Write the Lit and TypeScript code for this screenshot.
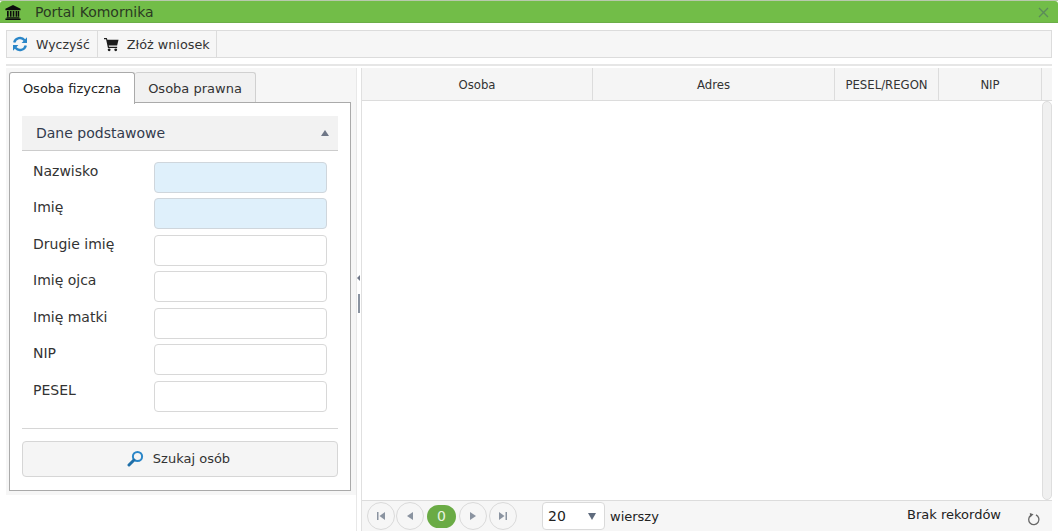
import { LitElement, html, css, svg } from "lit";
import { customElement } from "lit/decorators.js";

const field = (label: string, req = false) => html`
  <label class="lbl">${label}</label><div class="inp ${req ? "req" : ""}"></div>`;

const pagerIcon = (d: string) => svg`<svg width="12" height="12" viewBox="0 0 12 12"><path d=${d} fill="#8a93a0"/></svg>`;

@customElement("app-root")
export class AppRoot extends LitElement {
  static styles = css`
    :host {
      display: flex; flex-direction: column; width: 1058px; height: 531px; overflow: hidden;
      background: #fff; font-family: "DejaVu Sans", sans-serif; font-size: 13px; color: #222; box-sizing: border-box;
    }
    * { box-sizing: border-box; }
    .top { height: 1px; background: #b9c9ae; flex: none; }
    .title {
      flex: none; height: 22px; background: #72bd48; border-bottom: 1px solid #6cae48; border-radius: 3px 3px 0 0;
      display: flex; align-items: center; padding: 1px 9px 0 5px; color: #2a3a22;
    }
    .title svg { flex: none; }
    .title span { margin-left: 14px; flex: 1; font-size: 14px; margin-top: -1px; }
    .toolbar {
      flex: none; height: 28px; margin: 7px 6px 0; border: 1px solid #dcdcdc; background: #f6f6f6; display: flex;
    }
    .tbtn { display: flex; align-items: center; border-right: 1px solid #dcdcdc; padding: 0 7px 0 5px; gap: 8px; font-size: 12.5px; color: #333; }
    .tbtn.two { padding: 0 6px 0 6px; gap: 8px; font-size: 12.8px; }
    .rule { flex: none; height: 2px; margin: 6px 6px 0; background: #e6e6e6; }
    .main { flex: 1; display: flex; min-height: 0; margin: 2px 6px 0; }
    .left { flex: none; width: 350px; display: flex; flex-direction: column; }
    .leftbox { background: #f6f6f6; padding: 4px 5px 4px 3px; height: 427px; display: flex; flex-direction: column; }
    .tabs { display: flex; height: 31px; flex: none; }
    .tab {
      height: 31px; border: 1px solid #d0d0d0; border-bottom: 0; border-left: 0; border-radius: 3px 3px 0 0; background: #f1f1f1;
      display: flex; align-items: center; justify-content: center; width: 121px; font-size: 13px; color: #333;
    }
    .tab.on {
      width: 126px; background: #fff; border: 1px solid #aaa; border-bottom: 0; position: relative; z-index: 1; height: 32px; color: #222; padding-bottom: 1px;
    }
    .panel {
      flex: 1; background: #fff; border: 1px solid #aaa; padding: 13px 12px 12px; display: flex; flex-direction: column; margin-top: -1px;
    }
    .sect {
      flex: none; height: 35px; background: #f2f2f2; border-bottom: 1px solid #ccc; display: flex; align-items: center;
      justify-content: space-between; padding: 0 9px 0 14px; font-size: 14px; color: #333b4d;
    }
    .tri { width: 0; height: 0; border-left: 4px solid transparent; border-right: 4px solid transparent; border-bottom: 6px solid #6f7787; }
    .form {
      flex: none; display: grid; grid-template-columns: 121px 173px; grid-auto-rows: 31px; row-gap: 5.5px; padding: 10.9px 0 0 11px;
    }
    .lbl { font-size: 14px; line-height: 18px; color: #333; }
    .inp { border: 1px solid #d8d8d8; border-radius: 4px; background: #fff; }
    .inp.req { background: #dff0fb; border-color: #cfd6dc; }
    .divider { flex: none; height: 1px; background: #d6d6d6; margin-top: 16.1px; }
    .search {
      flex: none; height: 36px; margin-top: 12px; border: 1px solid #d6d6d6; border-radius: 4px; background: #f5f5f5;
      display: flex; align-items: center; justify-content: center; gap: 9px; font-size: 13px; color: #333; padding-right: 3px;
    }
    .split {
      flex: none; width: 6px; position: relative; background: #fff; border-left: 1px solid #e8e8e8; border-right: 1px solid #e0e0e0;
    }
    .split i { position: absolute; left: 0; top: 207px; width: 0; height: 0; border-top: 3px solid transparent; border-bottom: 3px solid transparent; border-right: 3px solid #6f7787; }
    .split b { position: absolute; left: 1px; top: 226px; width: 2px; height: 19px; background: #8a93a0; }
    .right { flex: 1; display: flex; flex-direction: column; min-width: 0; }
    .ghead { flex: none; height: 33px; background: #f5f5f5; border-bottom: 1px solid #dcdcdc; display: flex; }
    .col {
      display: flex; align-items: center; justify-content: center; border-right: 1px solid #dcdcdc; font-size: 13px; color: #333;
      font-stretch: condensed; font-family: "DejaVu Sans Condensed", "DejaVu Sans", sans-serif; flex: none;
    }
    .gbody { flex: 1; display: flex; justify-content: flex-end; min-height: 0; }
    .sb { width: 10px; border: 1px solid #dedede; border-radius: 6px; background: #f0f0f0; }
    .pager {
      flex: none; height: 31px; background: #f6f6f6; border-top: 1px solid #dcdcdc; display: flex; align-items: center; padding: 0 11px 0 5px;
    }
    .pb { width: 28px; height: 28px; border: 1px solid #dadada; border-radius: 50%; display: flex; align-items: center; justify-content: center; margin-right: 1px; flex: none; }
    .pb.gap { margin-right: 2px; }
    .cur { width: 29px; height: 23px; border-radius: 12px; background: #6aab45; color: #e8f4e0; display: flex; align-items: center; justify-content: center; margin: 0 3px 0 2px; font-size: 14px; flex: none; }
    .sel { margin-left: 24px; width: 63px; height: 28px; border: 1px solid #dadada; border-radius: 4px; background: #fff; display: flex; align-items: center; justify-content: space-between; padding: 0 8px 0 5px; font-size: 14px; flex: none; }
    .sel i { width: 0; height: 0; border-left: 4px solid transparent; border-right: 4px solid transparent; border-top: 7px solid #5f6b7d; }
    .wi { margin-left: 5px; font-size: 13px; }
    .brak { margin-left: auto; margin-top: -3px; font-size: 13px; }
    .rf { margin-left: 26px; margin-top: 5px; flex: none; }
  `;

  render() {
    return html`
      <div class="top"></div>
      <div class="title">
        <svg width="16" height="15" viewBox="0 0 20 16" preserveAspectRatio="none">
          <path d="M10 0 L19.5 4 V5.5 H0.5 V4 Z M2 13 H18 V14 H2 Z M0.5 14.5 H19.5 V16 H0.5 Z" fill="#0c0c0c"/>
          <path d="M2.5 6.5 H4.6 V12.5 H2.5 Z M6.1 6.5 H8.2 V12.5 H6.1 Z M9.6 6.5 H11.7 V12.5 H9.6 Z M13.2 6.5 H15.3 V12.5 H13.2 Z M16 6.5 H17.8 V12.5 H16 Z" fill="#0c0c0c"/>
        </svg>
        <span>Portal Komornika</span>
        <svg width="11" height="11" viewBox="0 0 11 11"><path d="M1 1 L10 10 M10 1 L1 10" stroke="#5b8a5a" stroke-width="1.3"/></svg>
      </div>
      <div class="toolbar">
        <div class="tbtn">
          <svg width="16" height="16" viewBox="0 0 16 16" fill="none" stroke="#2a86c8" stroke-width="2.4">
            <path d="M2.2 6.5 A6 6 0 0 1 12.6 4.2"/><path d="M13.8 9.5 A6 6 0 0 1 3.4 11.8"/>
            <path d="M15 1.2 V7 H9.6 Z M1 14.8 V9 H6.4 Z" fill="#2a86c8" stroke="none"/>
          </svg>
          <span>Wyczyść</span>
        </div>
        <div class="tbtn two">
          <svg width="15" height="15" viewBox="0 0 16 15">
            <path d="M0 0.5 H3 L3.6 2.5 H15.5 L14 8.5 H5 L5.4 10 H14 V11.3 H4.2 L2.2 1.8 H0 Z" fill="#1c1c1c"/>
            <circle cx="5.5" cy="13.2" r="1.5" fill="#1c1c1c"/><circle cx="12.5" cy="13.2" r="1.5" fill="#1c1c1c"/>
          </svg>
          <span>Złóż wniosek</span>
        </div>
      </div>
      <div class="rule"></div>
      <div class="main">
        <div class="left">
          <div class="leftbox">
            <div class="tabs">
              <div class="tab on">Osoba fizyczna</div>
              <div class="tab">Osoba prawna</div>
            </div>
            <div class="panel">
              <div class="sect"><span>Dane podstawowe</span><div class="tri"></div></div>
              <div class="form">
                ${field("Nazwisko", true)}${field("Imię", true)}${field("Drugie imię")}${field("Imię ojca")}${field("Imię matki")}${field("NIP")}${field("PESEL")}
              </div>
              <div class="divider"></div>
              <div class="search">
                <svg width="17" height="17" viewBox="0 0 17 17" fill="none">
                  <circle cx="10.5" cy="6.5" r="4.6" stroke="#2a86c8" stroke-width="2"/>
                  <path d="M7 10 L2 15" stroke="#1f6fa8" stroke-width="3" stroke-linecap="round"/>
                </svg>
                <span>Szukaj osób</span>
              </div>
            </div>
          </div>
        </div>
        <div class="split"><i></i><b></b></div>
        <div class="right">
          <div class="ghead">
            <div class="col" style="width:231px">Osoba</div>
            <div class="col" style="width:242px">Adres</div>
            <div class="col" style="width:104px">PESEL/REGON</div>
            <div class="col" style="width:103px">NIP</div>
          </div>
          <div class="gbody"><div class="sb"></div></div>
          <div class="pager">
            <div class="pb">${pagerIcon("M2 2 H3.5 V10 H2 Z M10 2 V10 L4.5 6 Z")}</div>
            <div class="pb">${pagerIcon("M9 2 V10 L3 6 Z")}</div>
            <div class="cur">0</div>
            <div class="pb gap">${pagerIcon("M3 2 V10 L9 6 Z")}</div>
            <div class="pb">${pagerIcon("M10 2 H8.5 V10 H10 Z M2 2 V10 L7.5 6 Z")}</div>
            <div class="sel"><span>20</span><i></i></div>
            <span class="wi">wierszy</span>
            <span class="brak">Brak rekordów</span>
            <svg class="rf" width="14" height="14" viewBox="0 0 15 15" fill="none">
              <path d="M9.6 3 A5.5 5.5 0 1 1 4 3.6" stroke="#666" stroke-width="1.4"/>
              <path d="M3 1 L7 2.5 L3.5 6 Z" fill="#666"/>
            </svg>
          </div>
        </div>
      </div>
    `;
  }
}
